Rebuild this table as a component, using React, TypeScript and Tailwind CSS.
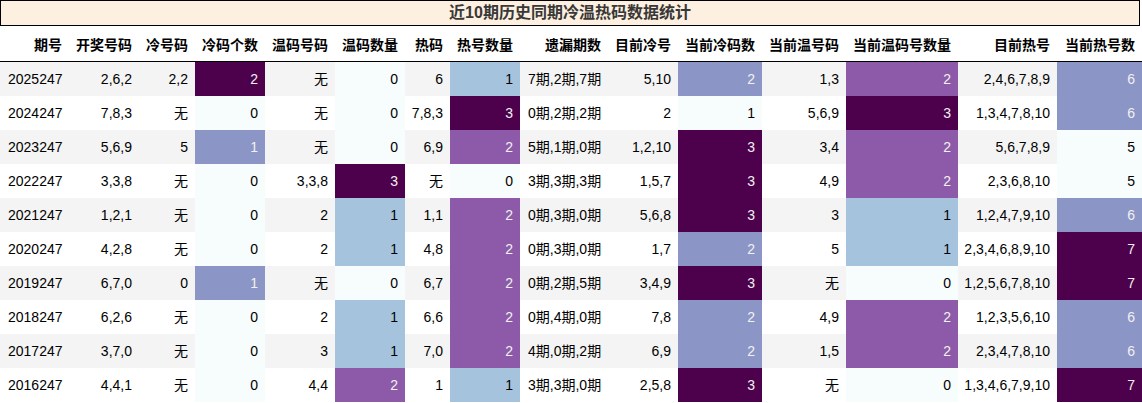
import React from 'react';

type Shade = 'none' | 'pale' | 'light' | 'mid' | 'purple' | 'dark';

const shadeClass: Record<Shade, string> = {
  none: '',
  pale: 'bg-[#f7fcfd] text-black',
  light: 'bg-[#a6c3dd] text-black',
  mid: 'bg-[#8c96c6] text-[#f1f1f1]',
  purple: 'bg-[#8c5aa9] text-[#f1f1f1]',
  dark: 'bg-[#4d004b] text-[#f1f1f1]',
};

const headers = [
  '期号', '开奖号码', '冷号码', '冷码个数', '温码号码', '温码数量', '热码', '热号数量',
  '遗漏期数', '目前冷号', '当前冷码数', '当前温号码', '当前温码号数量', '目前热号', '当前热号数',
];

const rows: string[][] = [
  ['2025247', '2,6,2', '2,2', '2', '无', '0', '6', '1', '7期,2期,7期', '5,10', '2', '1,3', '2', '2,4,6,7,8,9', '6'],
  ['2024247', '7,8,3', '无', '0', '无', '0', '7,8,3', '3', '0期,2期,2期', '2', '1', '5,6,9', '3', '1,3,4,7,8,10', '6'],
  ['2023247', '5,6,9', '5', '1', '无', '0', '6,9', '2', '5期,1期,0期', '1,2,10', '3', '3,4', '2', '5,6,7,8,9', '5'],
  ['2022247', '3,3,8', '无', '0', '3,3,8', '3', '无', '0', '3期,3期,3期', '1,5,7', '3', '4,9', '2', '2,3,6,8,10', '5'],
  ['2021247', '1,2,1', '无', '0', '2', '1', '1,1', '2', '0期,3期,0期', '5,6,8', '3', '3', '1', '1,2,4,7,9,10', '6'],
  ['2020247', '4,2,8', '无', '0', '2', '1', '4,8', '2', '0期,3期,0期', '1,7', '2', '5', '1', '2,3,4,6,8,9,10', '7'],
  ['2019247', '6,7,0', '0', '1', '无', '0', '6,7', '2', '0期,2期,5期', '3,4,9', '3', '无', '0', '1,2,5,6,7,8,10', '7'],
  ['2018247', '6,2,6', '无', '0', '2', '1', '6,6', '2', '0期,4期,0期', '7,8', '2', '4,9', '2', '1,2,3,5,6,10', '6'],
  ['2017247', '3,7,0', '无', '0', '3', '1', '7,0', '2', '4期,0期,2期', '6,9', '2', '1,5', '2', '2,3,4,7,8,10', '6'],
  ['2016247', '4,4,1', '无', '0', '4,4', '2', '1', '1', '3期,3期,0期', '2,5,8', '3', '无', '0', '1,3,4,6,7,9,10', '7'],
];

// per-column gradient lookup (value -> shade)
const gradients: Record<number, Record<string, Shade>> = {
  3: { '0': 'pale', '1': 'mid', '2': 'dark' },
  5: { '0': 'pale', '1': 'light', '2': 'purple', '3': 'dark' },
  7: { '0': 'pale', '1': 'light', '2': 'purple', '3': 'dark' },
  10: { '1': 'pale', '2': 'mid', '3': 'dark' },
  12: { '0': 'pale', '1': 'light', '2': 'purple', '3': 'dark' },
  14: { '5': 'pale', '6': 'mid', '7': 'dark' },
};

const leftAligned = [0, 8];

const gridCols =
  'grid grid-cols-[69px_70px_56px_70px_70px_70px_45px_70px_88px_70px_84px_84px_112px_99px_85px]';

export default function App() {
  return (
    <div
      className="w-[1142px] h-[403px] bg-white text-[14px] text-black overflow-hidden"
      style={{ fontFamily: '"Liberation Sans", "Noto Sans CJK SC", sans-serif' }}
    >
      {/* Title */}
      <div className="w-[1140px] h-[26px] border border-black bg-[#fef0e0] flex items-center justify-center">
        <span className="text-[16px] font-bold text-[#383838] leading-none">近10期历史同期冷温热码数据统计</span>
      </div>

      {/* Header */}
      <div className={`${gridCols} h-[36px] border-b border-black`}>
        {headers.map((h, i) => (
          <div key={i} className="flex items-center justify-end pr-[7px] pt-[3px] font-bold whitespace-nowrap">
            {h}
          </div>
        ))}
      </div>

      {/* Rows */}
      {rows.map((row, r) => (
        <div key={r} className={`${gridCols} h-[34px] ${r % 2 === 0 ? 'bg-[#f4f4f4]' : 'bg-white'}`}>
          {row.map((cell, c) => {
            const shade: Shade = gradients[c] ? gradients[c][cell] : 'none';
            const left = leftAligned.includes(c);
            return (
              <div
                key={c}
                className={`flex items-center whitespace-nowrap ${
                  left ? 'justify-start pl-[8px]' : 'justify-end pr-[7px]'
                } ${shadeClass[shade]}`}
              >
                {cell}
              </div>
            );
          })}
        </div>
      ))}
    </div>
  );
}
